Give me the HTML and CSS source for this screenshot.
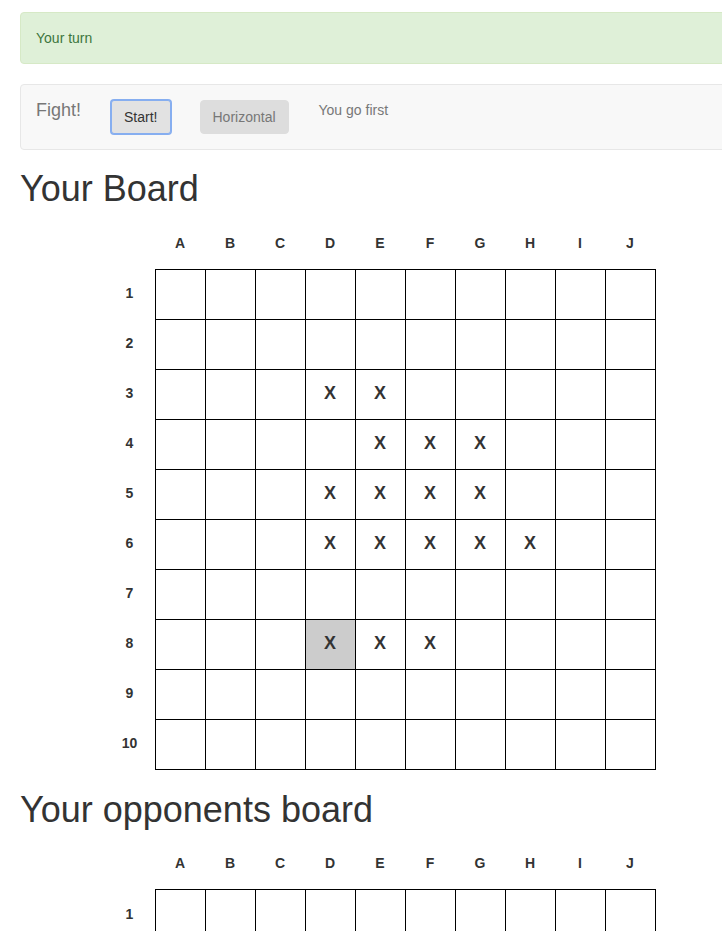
FILE: index.html
```html
<!DOCTYPE html>
<html lang="en">
<head>
<meta charset="utf-8">
<title>Battleship</title>
<link rel="stylesheet" href="styles.css">
</head>
<body>
<div class="page">
  <div class="alert">Your turn</div>
  <nav class="navbar">
    <span class="brand">Fight!</span>
    <button class="btn btn-focus">Start!</button>
    <button class="btn btn-muted">Horizontal</button>
    <span class="navbar-text">You go first</span>
  </nav>

  <h1 class="title">Your Board</h1>
  <table class="board">
    <thead>
      <tr><th></th><th>A</th><th>B</th><th>C</th><th>D</th><th>E</th><th>F</th><th>G</th><th>H</th><th>I</th><th>J</th></tr>
    </thead>
    <tbody>
      <tr><th>1</th><td></td><td></td><td></td><td></td><td></td><td></td><td></td><td></td><td></td><td></td></tr>
      <tr><th>2</th><td></td><td></td><td></td><td></td><td></td><td></td><td></td><td></td><td></td><td></td></tr>
      <tr><th>3</th><td></td><td></td><td></td><td>X</td><td>X</td><td></td><td></td><td></td><td></td><td></td></tr>
      <tr><th>4</th><td></td><td></td><td></td><td></td><td>X</td><td>X</td><td>X</td><td></td><td></td><td></td></tr>
      <tr><th>5</th><td></td><td></td><td></td><td>X</td><td>X</td><td>X</td><td>X</td><td></td><td></td><td></td></tr>
      <tr><th>6</th><td></td><td></td><td></td><td>X</td><td>X</td><td>X</td><td>X</td><td>X</td><td></td><td></td></tr>
      <tr><th>7</th><td></td><td></td><td></td><td></td><td></td><td></td><td></td><td></td><td></td><td></td></tr>
      <tr><th>8</th><td></td><td></td><td></td><td class="hit">X</td><td>X</td><td>X</td><td></td><td></td><td></td><td></td></tr>
      <tr><th>9</th><td></td><td></td><td></td><td></td><td></td><td></td><td></td><td></td><td></td><td></td></tr>
      <tr><th>10</th><td></td><td></td><td></td><td></td><td></td><td></td><td></td><td></td><td></td><td></td></tr>
    </tbody>
  </table>

  <h1 class="title">Your opponents board</h1>
  <table class="board">
    <thead>
      <tr><th></th><th>A</th><th>B</th><th>C</th><th>D</th><th>E</th><th>F</th><th>G</th><th>H</th><th>I</th><th>J</th></tr>
    </thead>
    <tbody>
      <tr><th>1</th><td></td><td></td><td></td><td></td><td></td><td></td><td></td><td></td><td></td><td></td></tr>
      <tr><th>2</th><td></td><td></td><td></td><td></td><td></td><td></td><td></td><td></td><td></td><td></td></tr>
      <tr><th>3</th><td></td><td></td><td></td><td></td><td></td><td></td><td></td><td></td><td></td><td></td></tr>
      <tr><th>4</th><td></td><td></td><td></td><td></td><td></td><td></td><td></td><td></td><td></td><td></td></tr>
      <tr><th>5</th><td></td><td></td><td></td><td></td><td></td><td></td><td></td><td></td><td></td><td></td></tr>
      <tr><th>6</th><td></td><td></td><td></td><td></td><td></td><td></td><td></td><td></td><td></td><td></td></tr>
      <tr><th>7</th><td></td><td></td><td></td><td></td><td></td><td></td><td></td><td></td><td></td><td></td></tr>
      <tr><th>8</th><td></td><td></td><td></td><td></td><td></td><td></td><td></td><td></td><td></td><td></td></tr>
      <tr><th>9</th><td></td><td></td><td></td><td></td><td></td><td></td><td></td><td></td><td></td><td></td></tr>
      <tr><th>10</th><td></td><td></td><td></td><td></td><td></td><td></td><td></td><td></td><td></td><td></td></tr>
    </tbody>
  </table>
</div>
</body>
</html>
```

FILE: styles.css
```css
html, body {
  overflow-x: hidden;
}

body {
  margin: 0;
  font-family: "Liberation Sans", Arial, Helvetica, sans-serif;
  font-size: 14px;
  line-height: 1.42857;
  color: #333;
  background: #fff;
}

.page {
  width: 720px;
  margin-left: 20px;
  padding-top: 12px;
}

.alert {
  padding: 16px 15px 14px;
  margin-bottom: 20px;
  border: 1px solid #d6e9c6;
  border-radius: 4px;
  background: #dff0d8;
  color: #3c763d;
}

.navbar {
  display: flex;
  align-items: flex-start;
  padding: 15px 15px;
  margin-bottom: 19px;
  border: 1px solid #e7e7e7;
  border-radius: 4px;
  background: #f8f8f8;
}

.brand {
  font-size: 18px;
  line-height: 20px;
  color: #777;
}

.btn {
  font-family: inherit;
  font-size: 14px;
  line-height: 20px;
  padding: 6px 12px;
  border: 1px solid transparent;
  border-radius: 4px;
  cursor: pointer;
}

.btn-focus {
  margin-left: 30px;
  background: #e2e2e2;
  color: #333;
  border-radius: 3px;
  box-shadow: 0 0 0 1px #86aef0;
  border-color: #86aef0;
}

.btn-muted {
  margin-left: 29px;
  background: #dddddd;
  color: #777;
  border-color: #dddddd;
}

.navbar-text {
  margin-left: 30px;
  line-height: 20px;
  color: #777;
}

.title {
  margin: 19px 0 10px;
  font-size: 36px;
  font-weight: 500;
  line-height: 1.1;
  color: #333;
}

.board {
  margin: 0 auto 20px;
  border-collapse: collapse;
}

.board th {
  width: 50px;
  height: 50px;
  padding: 0;
  text-align: center;
  vertical-align: middle;
  font-size: 14px;
  font-weight: bold;
  color: #333;
}

.board td {
  width: 49px;
  height: 49px;
  padding: 0;
  border: 1px solid #000;
  text-align: center;
  vertical-align: middle;
  font-size: 18px;
  font-weight: bold;
  color: #333;
}

.board td.hit {
  background: #cccccc;
}
```
